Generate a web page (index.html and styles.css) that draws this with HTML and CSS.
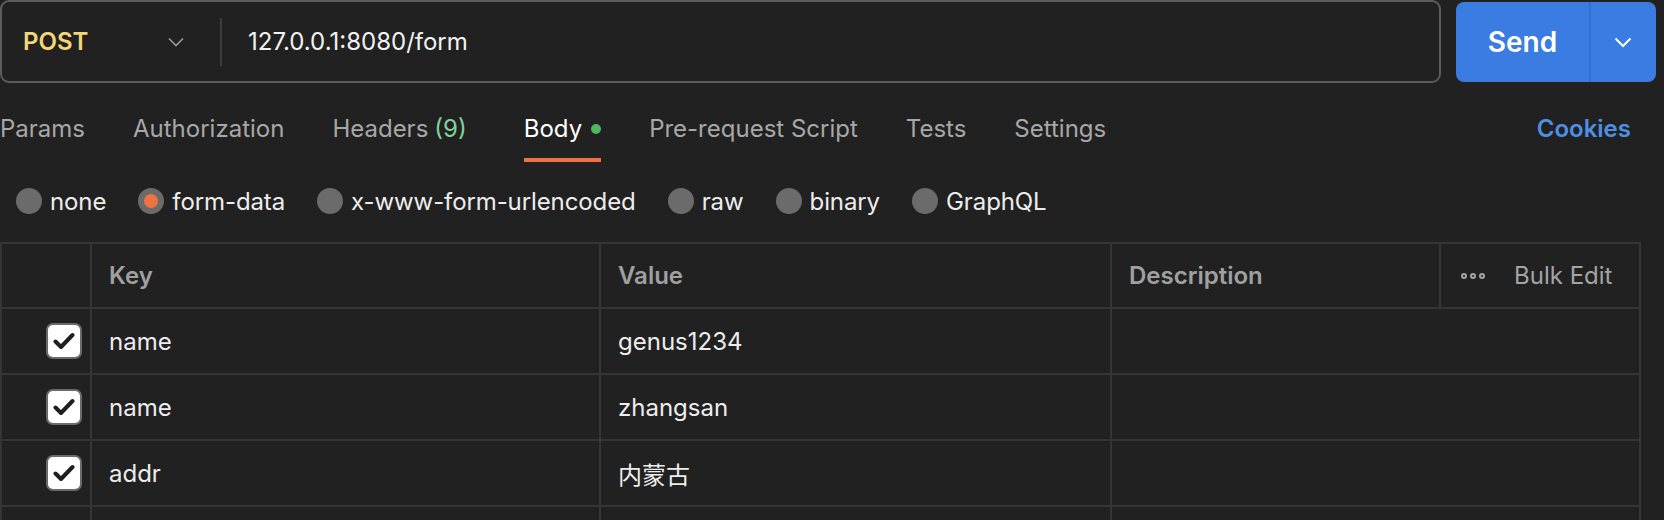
FILE: index.html
```html
<!DOCTYPE html>
<html>
<head>
<meta charset="utf-8">
<link rel="stylesheet" href="styles.css">
</head>
<body>
<div class="top">
  <div class="url-box">
    <div class="method">
      <span class="method-name">POST</span>
      <svg class="chev" width="16" height="10" viewBox="0 0 16 10"><path d="M1 1.5 L8 8.5 L15 1.5" fill="none" stroke="#9b9b9b" stroke-width="1.6"/></svg>
    </div>
    <div class="divider"></div>
    <div class="url">127.0.0.1:8080/form</div>
  </div>
  <div class="send">
    <span class="send-label">Send</span>
    <span class="send-more"><svg width="18" height="11" viewBox="0 0 18 11"><path d="M1.5 1.5 L9 9 L16.5 1.5" fill="none" stroke="#fff" stroke-width="2"/></svg></span>
  </div>
</div>

<div class="tabs">
  <div class="tab">Params</div>
  <div class="tab">Authorization</div>
  <div class="tab">Headers <span class="count">(9)</span></div>
  <div class="tab active">Body <span class="dot"></span></div>
  <div class="tab">Pre-request Script</div>
  <div class="tab">Tests</div>
  <div class="tab">Settings</div>
  <div class="tab cookies">Cookies</div>
</div>

<div class="radios">
  <div class="radio"><span class="circle"></span>none</div>
  <div class="radio"><span class="circle on"></span>form-data</div>
  <div class="radio"><span class="circle"></span>x-www-form-urlencoded</div>
  <div class="radio"><span class="circle"></span>raw</div>
  <div class="radio"><span class="circle"></span>binary</div>
  <div class="radio"><span class="circle"></span>GraphQL</div>
</div>

<div class="table">
  <div class="row head">
    <div class="cell"></div>
    <div class="cell">Key</div>
    <div class="cell">Value</div>
    <div class="cell">Description</div>
    <div class="cell bulk"><span class="dots"><i></i><i></i><i></i></span>Bulk Edit</div>
  </div>
  <div class="row body-row">
    <div class="cell check-cell"><span class="checkbox"><svg width="22" height="18" viewBox="0 0 22 18"><path d="M2.5 9.5 L8 15 L19.5 3" fill="none" stroke="#1f1f1f" stroke-width="4" stroke-linecap="round" stroke-linejoin="round"/></svg></span></div>
    <div class="cell">name</div>
    <div class="cell">genus1234</div>
    <div class="cell"></div>
  </div>
  <div class="row body-row">
    <div class="cell check-cell"><span class="checkbox"><svg width="22" height="18" viewBox="0 0 22 18"><path d="M2.5 9.5 L8 15 L19.5 3" fill="none" stroke="#1f1f1f" stroke-width="4" stroke-linecap="round" stroke-linejoin="round"/></svg></span></div>
    <div class="cell">name</div>
    <div class="cell">zhangsan</div>
    <div class="cell"></div>
  </div>
  <div class="row body-row">
    <div class="cell check-cell"><span class="checkbox"><svg width="22" height="18" viewBox="0 0 22 18"><path d="M2.5 9.5 L8 15 L19.5 3" fill="none" stroke="#1f1f1f" stroke-width="4" stroke-linecap="round" stroke-linejoin="round"/></svg></span></div>
    <div class="cell">addr</div>
    <div class="cell cjk">内蒙古</div>
    <div class="cell"></div>
  </div>
  <div class="row body-row">
    <div class="cell"></div>
    <div class="cell"></div>
    <div class="cell"></div>
    <div class="cell"></div>
  </div>
</div>
</body>
</html>
```

FILE: styles.css
```css
* { box-sizing: border-box; }
html, body {
  margin: 0;
  padding: 0;
  background: #212121;
  overflow: hidden;
}
body {
  font-family: Inter, "Noto Sans", "Noto Sans CJK SC", sans-serif;
  font-size: 24px;
  color: #ededed;
  width: 1664px;
  height: 520px;
}

/* top bar */
.top {
  display: flex;
  height: 83px;
  gap: 15px;
}
.url-box {
  flex: none;
  width: 1441px;
  height: 83px;
  border: 2px solid #5c5c5c;
  border-radius: 9px;
  display: flex;
  align-items: center;
}
.method {
  width: 218px;
  flex: none;
  display: flex;
  align-items: center;
  justify-content: space-between;
  padding: 0 36px 0 21px;
}
.method-name {
  color: #f4d676;
  font-weight: 600;
  font-size: 24px;
}
.chev { display: block; }
.divider {
  width: 2px;
  height: 48px;
  background: #3d3d3d;
  flex: none;
}
.url {
  padding-left: 26px;
  font-size: 24px;
  color: #f2f2f2;
}
.send {
  flex: none;
  width: 200px;
  height: 80px;
  margin-top: 2px;
  background: #3b7ce3;
  border-radius: 8px;
  display: flex;
  color: #fff;
}
.send-label {
  width: 135px;
  display: flex;
  align-items: center;
  justify-content: center;
  font-weight: 600;
  font-size: 28px;
  border-right: 2px solid #336fd0;
}
.send-more {
  flex: 1;
  display: flex;
  align-items: center;
  justify-content: center;
  padding-right: 2px;
}
.send-more svg { display: block; }

/* tabs */
.tabs {
  display: flex;
  height: 79px;
  gap: 48px;
  padding-left: 0;
  padding-right: 33px;
}
.tab {
  display: flex;
  align-items: center;
  gap: 8px;
  padding-top: 16px;
  border-bottom: 4px solid transparent;
  color: #a8a8a8;
  font-size: 24px;
  white-space: nowrap;
}
.tab .count { color: #7fd39b; margin-left: -2px; }
.tab.active {
  color: #ffffff;
  border-bottom-color: #ef7242;
  margin-left: 9px;
  gap: 9px;
}
.dot {
  width: 10px;
  height: 10px;
  border-radius: 50%;
  background: #4cb861;
  display: inline-block;
}
.tab.cookies {
  margin-left: auto;
  color: #4f8fe3;
  font-weight: 600;
}

/* radios */
.radios {
  display: flex;
  align-items: center;
  height: 80px;
  padding-left: 16px;
  padding-bottom: 2px;
  gap: 32px;
}
.radio {
  display: flex;
  align-items: center;
  gap: 8px;
  font-size: 24px;
  letter-spacing: -0.1px;
  color: #ededed;
}
.circle {
  width: 26px;
  height: 26px;
  border-radius: 50%;
  background: #6b6b6b;
  display: flex;
  align-items: center;
  justify-content: center;
}
.circle.on::after {
  content: "";
  width: 14px;
  height: 14px;
  border-radius: 50%;
  background: #ef7242;
}

/* table */
.table {
  width: 1641px;
  border-top: 2px solid #353535;
  border-left: 2px solid #353535;
  border-right: 2px solid #353535;
}
.row {
  display: grid;
  border-bottom: 2px solid #353535;
}
.row.head {
  grid-template-columns: 90px 509px 511px 329px 1fr;
  height: 65px;
  color: #a0a0a0;
  font-weight: 600;
}
.row.body-row {
  grid-template-columns: 90px 509px 511px 1fr;
  height: 66px;
}
.cell {
  display: flex;
  align-items: center;
  padding-left: 17px;
  border-right: 2px solid #353535;
}
.cell:last-child { border-right: none; }
.cjk { font-family: "Noto Sans CJK SC", sans-serif; }
.bulk {
  font-weight: 400;
  color: #a4a4a4;
  padding-left: 20px;
  gap: 29px;
}
.dots { display: flex; gap: 3px; }
.dots i {
  width: 6px;
  height: 6px;
  border: 2px solid #a4a4a4;
  border-radius: 50%;
  display: block;
}
.check-cell {
  justify-content: flex-end;
  padding-left: 0;
  padding-right: 8px;
}
.checkbox {
  width: 36px;
  height: 36px;
  background: #fff;
  border: 2px solid #6b6b6b;
  border-radius: 7px;
  display: flex;
  align-items: center;
  justify-content: center;
}
.checkbox svg { display: block; }
```
